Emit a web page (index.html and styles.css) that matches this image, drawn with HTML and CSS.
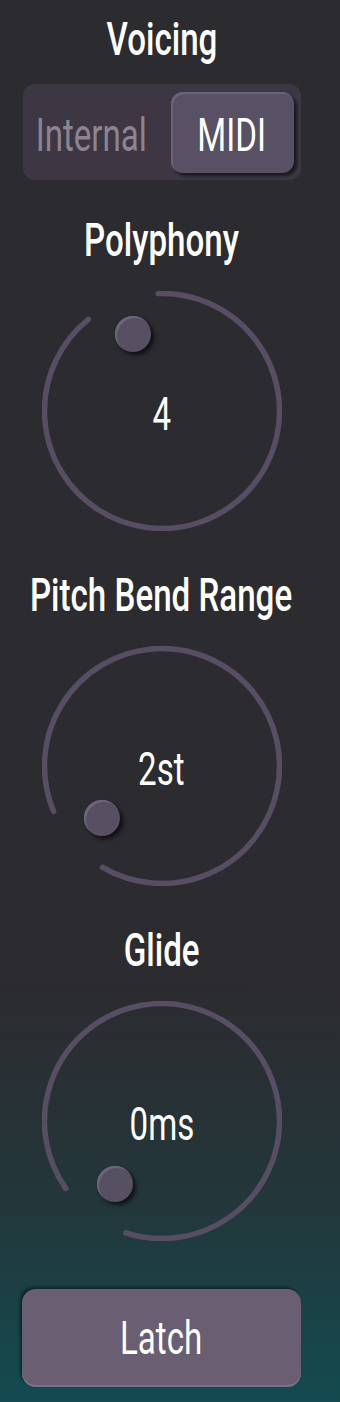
FILE: index.html
```html
<!DOCTYPE html>
<html>
<head>
<meta charset="utf-8">
<link rel="stylesheet" href="styles.css">
</head>
<body>
<div class="panel">
  <h2 class="label label-first"><span class="txt">Voicing</span></h2>
  <div class="segmented">
    <span class="seg seg-off"><span class="txt">Internal</span></span>
    <span class="seg seg-on"><span class="txt">MIDI</span></span>
  </div>

  <h2 class="label label-after-seg"><span class="txt">Polyphony</span></h2>
  <div class="knob">
    <svg class="ring" viewBox="0 0 240 240"><path d="M116.31 2.56 A117.5 117.5 0 1 1 46.37 28.43"/></svg>
    <span class="thumb" style="left:73.5px;top:25px"></span>
    <span class="value"><span class="txt">4</span></span>
  </div>

  <h2 class="label"><span class="txt">Pitch Bend Range</span></h2>
  <div class="knob">
    <svg class="ring" viewBox="0 0 240 240"><path d="M11.61 165.34 A117.5 117.5 0 1 1 60.72 221.45"/></svg>
    <span class="thumb" style="left:42.5px;top:154px"></span>
    <span class="value"><span class="txt">2st</span></span>
  </div>

  <h2 class="label"><span class="txt">Glide</span></h2>
  <div class="knob">
    <svg class="ring" viewBox="0 0 240 240"><path d="M23.87 187.56 A117.5 117.5 0 1 1 83.88 231.81"/></svg>
    <span class="thumb" style="left:55.5px;top:165px"></span>
    <span class="value"><span class="txt">0ms</span></span>
  </div>

  <button class="latch"><span class="txt">Latch</span></button>
</div>
</body>
</html>
```

FILE: styles.css
```css
html, body {
  margin: 0;
  padding: 0;
}
body {
  width: 340px;
  min-height: 1402px;
  background: linear-gradient(to bottom, #2c2b2f 0%, #2c2b2f 70%, #23373b 86%, #124b50 100%);
  font-family: Roboto, "Liberation Sans", sans-serif;
  font-weight: 500;
  color: #ffffff;
  overflow: hidden;
}
.panel {
  width: 323px;
  display: flex;
  flex-direction: column;
  align-items: center;
}
.txt {
  display: inline-block;
  transform: scaleX(0.72);
  transform-origin: center;
  white-space: nowrap;
}
.label {
  margin: 39px 0 0;
  font-size: 46px;
  line-height: 50px;
  font-weight: 500;
  color: #ffffff;
  white-space: nowrap;
  text-align: center;
}
.label-first { margin-top: 14px; }
.label-after-seg { margin-top: 35px; }

.segmented {
  margin-top: 20px;
  width: 278px;
  height: 96px;
  box-sizing: border-box;
  padding: 8px 7px 7px 0;
  border-radius: 12px;
  background: #3c3743;
  display: grid;
  grid-template-columns: minmax(0, 1fr) 123px;
  gap: 10px;
}
.seg {
  display: flex;
  align-items: center;
  justify-content: center;
  min-width: 0;
  font-size: 46px;
  line-height: 50px;
  padding-top: 4px;
  font-weight: 400;
}
.seg-off {
  color: #8b8590;
}
.seg-on {
  color: #ffffff;
  background: #585064;
  border-radius: 12px;
  box-shadow: inset 2px 2px 1px #6c647a, 3px 3px 3px rgba(0, 0, 0, 0.55);
}

.knob {
  position: relative;
  margin-top: 26px;
  width: 240px;
  height: 240px;
  display: flex;
  align-items: center;
  justify-content: center;
}
.ring {
  position: absolute;
  left: 0;
  top: 0;
  width: 240px;
  height: 240px;
  fill: none;
  stroke: #574e63;
  stroke-width: 5.5;
  stroke-linecap: round;
}
.thumb {
  position: absolute;
  width: 36px;
  height: 36px;
  border-radius: 50%;
  background: #574f62;
  box-shadow: inset 2px 2px 1px #6f677b, 3px 3px 4px rgba(0, 0, 0, 0.65);
}
.value {
  position: relative;
  font-size: 46px;
  line-height: 50px;
  padding-top: 5px;
  font-weight: 400;
  color: #ffffff;
}

.latch {
  margin-top: 48px;
  width: 279px;
  height: 98px;
  border: none;
  border-radius: 14px;
  background: #6a5e72;
  color: #ffffff;
  font-family: inherit;
  font-weight: 400;
  font-size: 46px;
  line-height: 50px;
  padding: 0;
  box-shadow: -2px -2px 3px rgba(0, 0, 0, 0.45), inset 0 -2px 0 #7b7184;
}
```
